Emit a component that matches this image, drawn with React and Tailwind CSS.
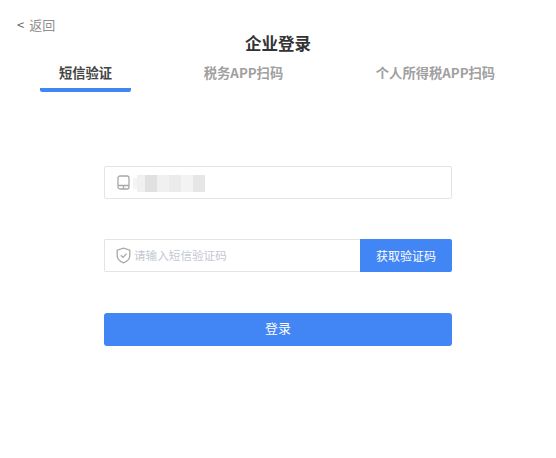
function PhoneIcon() {
  return (
    <svg width="14" height="15" viewBox="0 0 14 15" fill="none" stroke="#a8a8a8" strokeWidth="1.3" className="shrink-0">
      <rect x="1" y="1" width="11" height="13" rx="2" />
      <path d="M1 10.5h11M6.5 10.5v3.5" />
    </svg>
  );
}
function ShieldIcon() {
  return (
    <svg width="15" height="17" viewBox="0 0 15 17" fill="none" stroke="#a8a8a8" strokeWidth="1.3" className="shrink-0">
      <path d="M7.5 1.2 13.8 3.2V8.5C13.8 12 11 14.6 7.5 15.8 4 14.6 1.2 12 1.2 8.5V3.2Z" />
      <path d="M4.8 8.2 7 10.4 10.6 6.6" />
    </svg>
  );
}
const blocks = [
  ["w-[4px] my-[3px]", "bg-[#f4f4f4]"],
  ["w-[8px]", "bg-[#f0f0f0]"],
  ["w-[12px]", "bg-[#e0e0e0]"],
  ["w-[12px]", "bg-[#f0f0f0]"],
  ["w-[12px]", "bg-[#ebebeb]"],
  ["w-[12px]", "bg-[#f3f3f3]"],
  ["w-[12px]", "bg-[#e6e6e6]"],
];
export default function App() {
  return (
    <div className="w-[556px] h-[458px] bg-white overflow-hidden font-['Noto_Sans_CJK_SC','Liberation_Sans',sans-serif]">
      <a className="block pl-[17px] pt-[16px] text-[13px] leading-[18px] text-[#8f8f8f]">
        <span className="mr-[5px] text-[#666]">&lt;</span>返回
      </a>
      <h1 className="-mt-[1px] text-center text-[16.5px] leading-[20px] font-bold text-[#333]">企业登录</h1>
      <div className="mt-[11px] flex h-[28px] text-[13.3px] leading-[18px] font-bold text-[#a0a0a0]">
        <div className="ml-[40px] w-[91px] h-[28px] border-b-[4px] border-[#4285f4] rounded-b-[2px] text-center text-[#444]">短信验证</div>
        <div className="ml-[72px] w-[81px] text-center whitespace-nowrap">税务APP扫码</div>
        <div className="ml-[91px] w-[121px] text-center whitespace-nowrap">个人所得税APP扫码</div>
      </div>
      <div className="mx-[104px] mt-[74px] flex flex-col">
        <div className="h-[33px] flex items-center pl-[12px] border border-[#e4e4e4] rounded-[2px]">
          <PhoneIcon />
          <div className="ml-[2px] mt-[1px] flex h-[17px]">
            {blocks.map(([w, c], i) => <div key={i} className={w + " " + c} />)}
          </div>
        </div>
        <div className="mt-[40px] h-[33px] flex">
          <div className="flex-1 flex items-center pl-[11px] border border-r-0 border-[#e4e4e4] rounded-l-[2px]">
            <ShieldIcon />
            <span className="ml-[3px] text-[11.6px] text-[#c4c8d0] whitespace-nowrap">请输入短信验证码</span>
          </div>
          <button className="w-[92px] bg-[#4285f4] rounded-r-[2px] text-white text-[12px]">获取验证码</button>
        </div>
        <button className="mt-[41px] h-[33px] pb-[3px] bg-[#4285f4] rounded-[3px] text-white text-[13px]">登录</button>
      </div>
    </div>
  );
}
